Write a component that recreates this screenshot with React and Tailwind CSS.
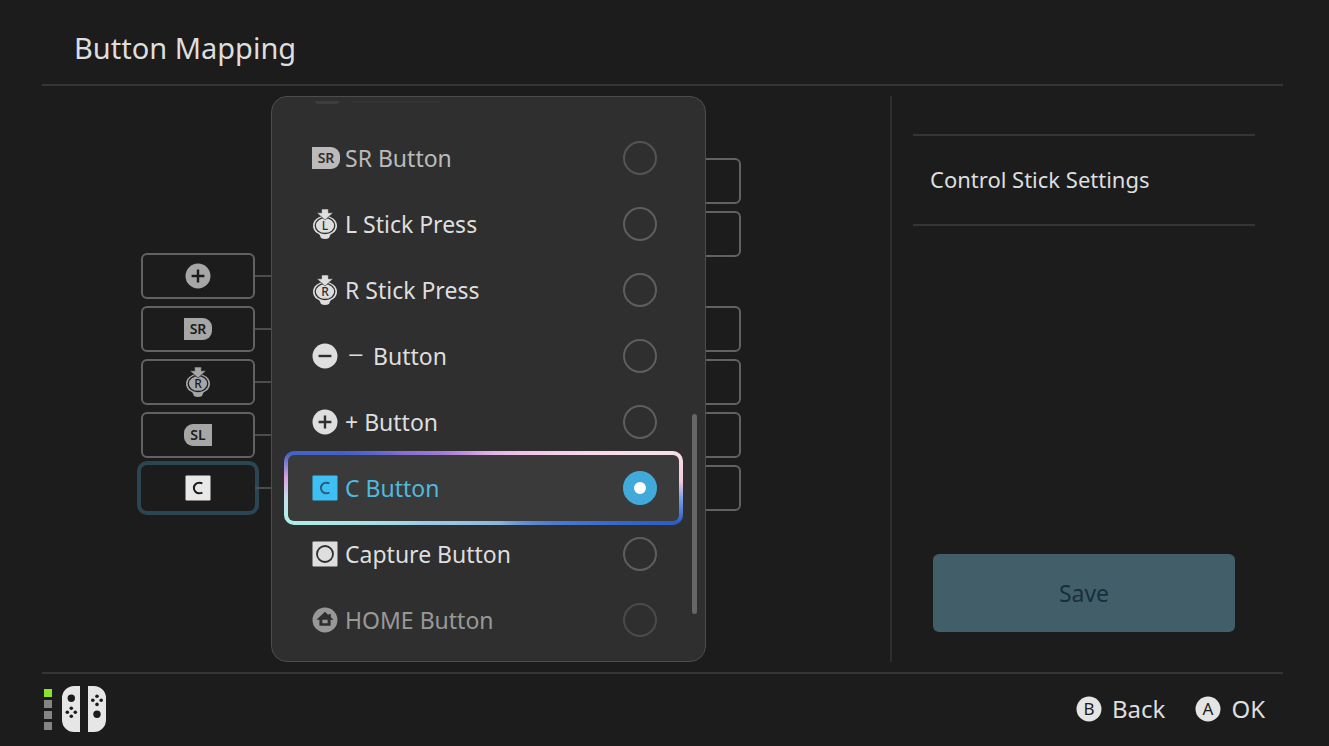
import { useState } from 'react';

const PlusIcon = ({ cut = '#2f2f2f' }) => (
  <svg viewBox="0 0 26 26" className="size-[26px] shrink-0" aria-hidden="true">
    <circle cx="13" cy="13" r="12.5" fill="currentColor" />
    <path d="M13 6.6v12.8M6.6 13h12.8" stroke={cut} strokeWidth="2.4" />
  </svg>
);

const MinusIcon = ({ cut = '#2f2f2f' }) => (
  <svg viewBox="0 0 26 26" className="size-[26px] shrink-0" aria-hidden="true">
    <circle cx="13" cy="13" r="12.5" fill="currentColor" />
    <path d="M6.6 13h12.8" stroke={cut} strokeWidth="2.4" />
  </svg>
);

const SideIcon = ({ label, cut = '#2f2f2f' }) => (
  <svg viewBox="0 0 28 22" className="h-[22px] w-7 shrink-0" aria-hidden="true">
    <path
      d={label === 'SR' ? 'M0 0h19a9 9 0 0 1 9 9v4a9 9 0 0 1-9 9H0z' : 'M28 0H9a9 9 0 0 0-9 9v4a9 9 0 0 0 9 9h19z'}
      fill="currentColor"
    />
    <text x="14" y="16" textAnchor="middle" fontSize="14" fontWeight="600" fill={cut}>
      {label}
    </text>
  </svg>
);

const StickIcon = ({ label, cut = '#2f2f2f' }) => (
  <svg viewBox="0 0 26 30" className="h-[30px] w-[26px] shrink-0" aria-hidden="true">
    <path d="M6.5 23h13l-2.5 6q-4 1.8-8 0z" fill="currentColor" />
    <ellipse cx="13" cy="16.8" rx="12" ry="10" fill="currentColor" />
    <ellipse cx="13" cy="16.6" rx="9.8" ry="7.9" fill="none" stroke={cut} strokeWidth="1.3" />
    <path d="M9.6 0h6.8v3.8h4.8L13 11 4.8 3.8h4.8z" fill="currentColor" stroke={cut} strokeWidth="0.6" />
    <text x="13" y="21.4" textAnchor="middle" fontSize="12" fontWeight="500" fill={cut}>
      {label}
    </text>
  </svg>
);

const CIcon = ({ cut = '#2f2f2f' }) => (
  <svg viewBox="0 0 26 26" className="size-[26px] shrink-0" aria-hidden="true">
    <rect x="0.5" y="0.5" width="25" height="25" rx="1" fill="currentColor" />
    <path d="M17.4 8.5Q16.2 7.7 14.2 7.7A5.3 5.3 0 0 0 14.2 18.3Q16.2 18.3 17.4 17.5" fill="none" stroke={cut} strokeWidth="2" />
  </svg>
);

const CaptureIcon = ({ cut = '#2f2f2f' }) => (
  <svg viewBox="0 0 26 26" className="size-[26px] shrink-0" aria-hidden="true">
    <rect x="0.5" y="0.5" width="25" height="25" rx="1" fill="currentColor" />
    <circle cx="13" cy="13" r="8" fill="none" stroke={cut} strokeWidth="1.8" />
  </svg>
);

const HomeIcon = ({ cut = '#2f2f2f' }) => (
  <svg viewBox="0 0 26 26" className="size-[26px] shrink-0" aria-hidden="true">
    <circle cx="13" cy="13" r="12.5" fill="currentColor" />
    <path d="M13 4.8L4.4 12.8H7.4V18.8H18.6V12.8H21.6L18.8 10.2V7H16.6V8.2zM10.4 12.8h5.2v3.4h-5.2z" fill={cut} fillRule="evenodd" />
  </svg>
);

const LetterIcon = ({ label }) => (
  <svg viewBox="0 0 26 26" className="size-[26px] shrink-0 text-[#e4e4e4]" aria-hidden="true">
    <circle cx="13" cy="13" r="12.5" fill="currentColor" />
    <text x="13" y="19" textAnchor="middle" fontSize="17" fontWeight="400" fill="#1c1c1c">
      {label}
    </text>
  </svg>
);

const JoyConIcon = () => (
  <svg viewBox="0 0 44 46" className="h-[46px] w-11 shrink-0" aria-label="Joy-Con">
    <path d="M18 0v46h-6A12 12 0 0 1 0 34V12A12 12 0 0 1 12 0zM26 0v46h6a12 12 0 0 0 12-12V12A12 12 0 0 0 32 0z" fill="#e6e6e6" />
    <g fill="#1c1c1c">
      <circle cx="9.3" cy="12.2" r="3.7" />
      <circle cx="9.3" cy="22.2" r="1.8" />
      <circle cx="5.3" cy="26.2" r="1.8" />
      <circle cx="13.3" cy="26.2" r="1.8" />
      <circle cx="9.3" cy="30.2" r="1.8" />
      <circle cx="35" cy="28.2" r="3.7" />
      <circle cx="35" cy="10.2" r="1.8" />
      <circle cx="30.8" cy="14.2" r="1.8" />
      <circle cx="39.2" cy="14.2" r="1.8" />
      <circle cx="35" cy="18.4" r="1.8" />
    </g>
  </svg>
);

const leftSlots = [
  { id: 'plus', name: 'Plus', icon: <PlusIcon cut="#1c1c1c" /> },
  { id: 'sr', name: 'SR', icon: <SideIcon label="SR" cut="#1c1c1c" /> },
  { id: 'rstick', name: 'R Stick', icon: <StickIcon label="R" cut="#1c1c1c" /> },
  { id: 'sl', name: 'SL', icon: <SideIcon label="SL" cut="#1c1c1c" /> },
  { id: 'c', name: 'C', icon: <CIcon cut="#1c1c1c" />, active: true },
];

const rightSlotGroups = [
  ['L', 'ZL'],
  ['Minus', 'Capture', 'L Stick', 'Directional'],
];

const options = [
  { id: 'sr', icon: <SideIcon label="SR" />, label: 'SR Button', look: 'opacity-80' },
  { id: 'lstick', icon: <StickIcon label="L" />, label: 'L Stick Press' },
  { id: 'rstick', icon: <StickIcon label="R" />, label: 'R Stick Press' },
  {
    id: 'minus',
    icon: <MinusIcon />,
    label: (
      <>
        <span className="inline-block w-[22px] text-center text-[28px] leading-none font-light">−</span> Button
      </>
    ),
  },
  { id: 'plus', icon: <PlusIcon />, label: '+ Button' },
  { id: 'c', icon: <CIcon cut="#24607c" />, label: 'C Button' },
  { id: 'capture', icon: <CaptureIcon />, label: 'Capture Button' },
  { id: 'home', icon: <HomeIcon />, label: 'HOME Button', look: 'opacity-60' },
];

const Option = ({ option, checked, onSelect }) => (
  <label
    className={`relative flex h-[66px] shrink-0 cursor-pointer items-center pr-[26px] pl-7 ${option.look || ''} ${
      checked ? 'text-[#4fb9de]' : 'text-[#dedede]'
    }`}
  >
    {checked && (
      <span className="absolute inset-x-0 -inset-y-1 rounded-[10px] border-4 border-transparent [background:linear-gradient(#3a3a3a,#3a3a3a)_padding-box,conic-gradient(#dca8e8_0deg,#f6c8ea_60deg,#f8e0ea_79deg,#f8c8dc_88deg,#7ba0e4_93deg,#2d5cc4_100deg,#3f70cc_108deg,#8cb4dc_155deg,#9ccbe4_240deg,#b0efe8_261deg,#c4e0ec_267deg,#d8a4dc_273deg,#4361c8_280deg,#4361c8_284deg,#8a70d0_294deg,#c090dc_330deg,#dca8e8_360deg)_border-box]" />
    )}
    <span className={`relative flex w-[33px] items-center ${checked ? 'text-[#3fc0f4]' : ''}`}>{option.icon}</span>
    <span className="relative flex-1">{option.label}</span>
    <input
      type="radio"
      name="mapping"
      value={option.id}
      checked={checked}
      onChange={onSelect}
      className="relative size-[34px] appearance-none rounded-full border-2 border-[#5e5e5e] checked:border-[11px] checked:border-[#42aadb] checked:bg-white"
    />
  </label>
);

const App = () => {
  const [selected, setSelected] = useState('c');

  return (
    <div className="flex min-h-screen flex-col bg-[#1c1c1c] pr-[46px] pl-[42px] font-['Noto_Sans',sans-serif] font-normal text-[#dedede]">
      {/* Title */}
      <header className="flex h-[86px] items-center border-b-2 border-[#353535] px-8 pt-3">
        <h1 className="text-[29px]">Button Mapping</h1>
      </header>

      <main className="flex flex-1 items-stretch py-[10px]">
        {/* Controller slots with the picker on top */}
        <section className="flex-1 pl-[99px]">
          <div className="relative flex h-full max-w-[600px] items-start justify-between">
            <div className="flex flex-col gap-[7px] pt-[157px]">
              {leftSlots.map((slot) => (
                <div key={slot.id} className="flex items-center">
                  <button
                    aria-label={slot.name}
                    className={`flex h-[46px] w-[114px] items-center justify-center rounded-md ${
                      slot.active
                        ? 'text-[#e8e8e8] ring-4 ring-[#2b4552]'
                        : 'border-2 border-[#626262] text-[#a6a6a6]'
                    }`}
                  >
                    {slot.icon}
                  </button>
                  <span className="h-[2px] w-4 bg-[#4c4c4c]" />
                </div>
              ))}
            </div>

            <div className="flex flex-col gap-[49px] pt-[62px]">
              {rightSlotGroups.map((group) => (
                <div key={group[0]} className="flex flex-col gap-[7px]">
                  {group.map((name) => (
                    <button key={name} aria-label={name} className="h-[46px] w-[114px] rounded-md border-2 border-[#626262]" />
                  ))}
                </div>
              ))}
            </div>

            {/* Picker */}
            <div
              role="dialog"
              aria-label="Button Mapping"
              className="absolute inset-y-0 left-[130px] flex w-[435px] flex-col justify-end overflow-hidden rounded-2xl border border-[#4c4c4c] bg-[#2f2f2f] pr-[22px] pb-2 pl-3 text-[23px]"
            >
              {/* Tail of the row scrolled out above */}
              <div className="absolute top-1 left-[43px] flex gap-3" aria-hidden="true">
                <span className="h-[3px] w-6 rounded-b bg-[#3d3d3d]" />
                <span className="h-[2px] w-[90px] bg-[#333333]" />
              </div>
              {options.map((option) => (
                <Option
                  key={option.id}
                  option={option}
                  checked={selected === option.id}
                  onSelect={() => setSelected(option.id)}
                />
              ))}
              <span className="absolute right-2 bottom-[47px] h-[200px] w-[5px] rounded-full bg-[#666666]" />
            </div>
          </div>
        </section>

        {/* Side column */}
        <aside className="flex w-[393px] flex-col border-l-2 border-[#2e2e2e] pt-[38px] pr-7 pb-[30px] pl-[21px]">
          <button className="h-[92px] border-y-2 border-[#353535] px-[17px] pb-[2px] text-left text-[22px]">
            Control Stick Settings
          </button>
          <button className="mx-5 mt-auto h-[78px] rounded-md bg-[#425e69] text-[23px] text-[#172f3a]">Save</button>
        </aside>
      </main>

      {/* Bottom bar */}
      <footer className="flex h-[74px] items-center justify-between border-t-2 border-[#353535] pr-[18px] pb-[2px]">
        <div className="flex items-center gap-[10px] pl-[2px]">
          <div className="flex flex-col gap-[3px]">
            <span className="size-2 bg-[#8fe02c]" />
            <span className="size-2 bg-[#858585]" />
            <span className="size-2 bg-[#858585]" />
            <span className="size-2 bg-[#858585]" />
          </div>
          <JoyConIcon />
        </div>
        <div className="flex gap-[30px] text-[24px]">
          <button className="flex items-center gap-[10px]">
            <LetterIcon label="B" />
            Back
          </button>
          <button className="flex items-center gap-[10px]">
            <LetterIcon label="A" />
            OK
          </button>
        </div>
      </footer>
    </div>
  );
};

export default App;
